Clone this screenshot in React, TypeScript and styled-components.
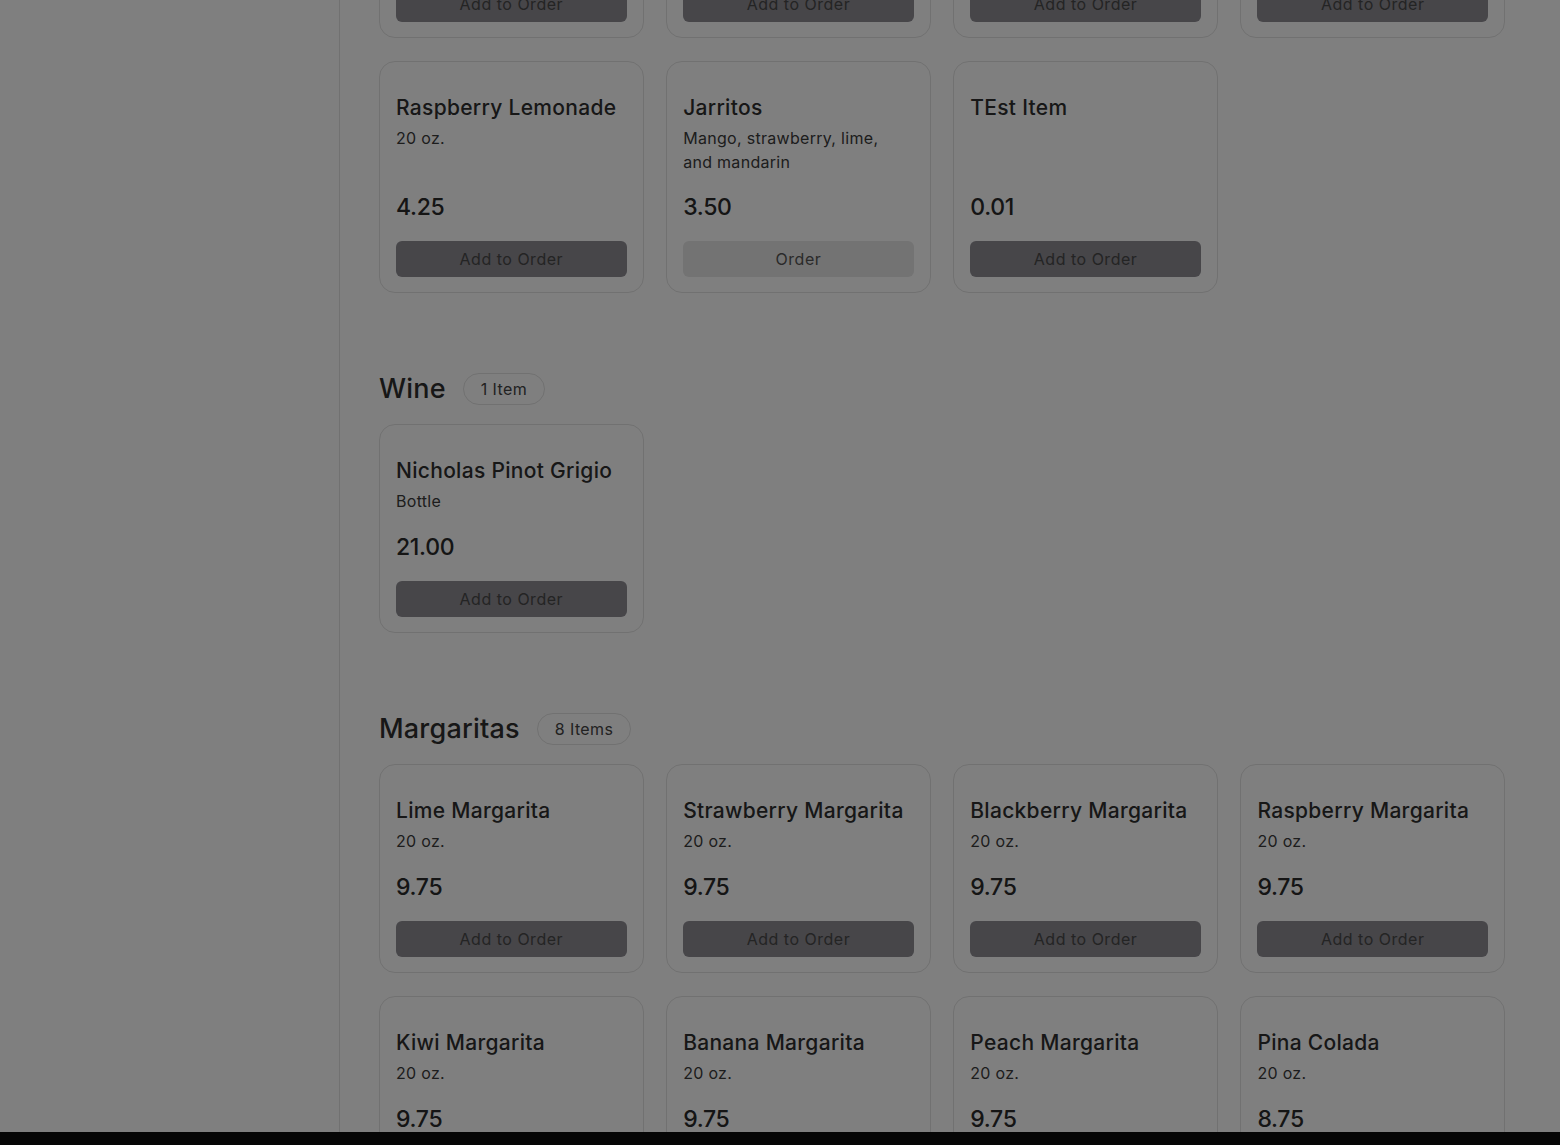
import React from 'react';
import styled, { createGlobalStyle } from 'styled-components';

interface MenuItem {
  name: string;
  description?: string;
  price: string;
  action?: 'add' | 'order';
}

interface MenuSection {
  title?: string;
  count?: string;
  items: MenuItem[];
}

const GlobalStyle = createGlobalStyle`
  html, body {
    margin: 0;
    padding: 0;
    background: #ffffff;
    overflow: hidden;
  }
  body {
    font-family: Inter, "Open Sans", sans-serif;
    color: #2f2f2f;
  }
`;

const Page = styled.div`
  display: flex;
  min-height: 100vh;
  height: 100vh;
  overflow: hidden;
`;

const Sidebar = styled.aside`
  width: 339px;
  flex-shrink: 0;
  border-right: 1px solid #e2e2e2;
  background: #ffffff;
`;

const Main = styled.main`
  flex: 1;
  padding: 0 55px 0 39px;
`;

/* the list is scrolled: the first visible row is the tail of a section */
const Scrolled = styled.div`
  margin-top: -171px;
`;

const Section = styled.section`
  margin-bottom: 80px;
`;

const SectionHeader = styled.div`
  display: flex;
  align-items: center;
  gap: 17px;
  height: 32px;
  margin-bottom: 19px;
`;

const SectionTitle = styled.h2`
  margin: 0;
  font-size: 27px;
  font-weight: 500;
  color: #2f2f2f;
  line-height: 34px;
  letter-spacing: 0.2px;
`;

const CountBadge = styled.span`
  display: inline-flex;
  align-items: center;
  height: 30px;
  padding: 0 17px;
  border: 1px solid #e2e2e2;
  border-radius: 999px;
  font-size: 16px;
  letter-spacing: 0.4px;
  color: #444;
`;

const Grid = styled.div`
  display: grid;
  grid-template-columns: repeat(4, 1fr);
  column-gap: 22.5px;
  row-gap: 23px;
`;

const Card = styled.div`
  display: flex;
  flex-direction: column;
  border: 1px solid #e2e2e2;
  border-radius: 16px;
  padding: 32px 16px 15px;
  box-sizing: border-box;
  min-height: 209px;
  background: #ffffff;
`;

const ItemName = styled.h3`
  margin: 0;
  font-size: 21px;
  font-weight: 500;
  line-height: 28px;
  letter-spacing: 0.3px;
  color: #2f2f2f;
  white-space: nowrap;
`;

const ItemDesc = styled.p`
  margin: 4px 0 0;
  font-size: 16px;
  line-height: 24px;
  min-height: 24px;
  letter-spacing: 0.3px;
  max-width: 215px;
  color: #3a3a3a;
`;

const Bottom = styled.div`
  margin-top: auto;
  padding-top: 18px;
  display: flex;
  flex-direction: column;
  gap: 19px;
`;

const Price = styled.div`
  font-size: 23px;
  font-weight: 500;
  line-height: 30px;
  letter-spacing: -0.3px;
  color: #2a2a2a;
`;

const ActionButton = styled.button<{ $variant: 'add' | 'order' }>`
  height: 36px;
  width: 100%;
  border: none;
  border-radius: 6px;
  font-family: inherit;
  font-size: 16px;
  letter-spacing: 0.5px;
  cursor: pointer;
  background: ${({ $variant }) => ($variant === 'add' ? '#8e8c93' : '#e6e6e6')};
  color: ${({ $variant }) => ($variant === 'add' ? '#484848' : '#555555')};
`;

const Overlay = styled.div`
  position: fixed;
  inset: 0;
  background: rgba(0, 0, 0, 0.5);
`;

const BottomSheet = styled.div`
  position: fixed;
  left: 0;
  right: 0;
  bottom: 0;
  height: 13px;
  background: #060606;
`;

const sections: MenuSection[] = [
  {
    items: [
      { name: 'Horchata', description: '20 oz.', price: '4.25' },
      { name: 'Iced Tea', description: '20 oz.', price: '3.50' },
      { name: 'Lemonade', description: '20 oz.', price: '3.75' },
      { name: 'Strawberry Lemonade', description: '20 oz.', price: '4.25' },
      { name: 'Raspberry Lemonade', description: '20 oz.', price: '4.25' },
      { name: 'Jarritos', description: 'Mango, strawberry, lime, and mandarin', price: '3.50', action: 'order' },
      { name: 'TEst Item', price: '0.01' }
    ]
  },
  {
    title: 'Wine',
    count: '1 Item',
    items: [{ name: 'Nicholas Pinot Grigio', description: 'Bottle', price: '21.00' }]
  },
  {
    title: 'Margaritas',
    count: '8 Items',
    items: [
      { name: 'Lime Margarita', description: '20 oz.', price: '9.75' },
      { name: 'Strawberry Margarita', description: '20 oz.', price: '9.75' },
      { name: 'Blackberry Margarita', description: '20 oz.', price: '9.75' },
      { name: 'Raspberry Margarita', description: '20 oz.', price: '9.75' },
      { name: 'Kiwi Margarita', description: '20 oz.', price: '9.75' },
      { name: 'Banana Margarita', description: '20 oz.', price: '9.75' },
      { name: 'Peach Margarita', description: '20 oz.', price: '9.75' },
      { name: 'Pina Colada', description: '20 oz.', price: '8.75' }
    ]
  }
];

const ItemCard: React.FC<{ item: MenuItem }> = ({ item }) => {
  const variant = item.action ?? 'add';
  return (
    <Card>
      <ItemName>{item.name}</ItemName>
      <ItemDesc>{item.description}</ItemDesc>
      <Bottom>
        <Price>{item.price}</Price>
        <ActionButton $variant={variant}>{variant === 'add' ? 'Add to Order' : 'Order'}</ActionButton>
      </Bottom>
    </Card>
  );
};

const App: React.FC = () => {
  return (
    <>
      <GlobalStyle />
      <Page>
        <Sidebar />
        <Main>
          <Scrolled>
            {sections.map((section, i) => (
              <Section key={i}>
                {section.title && (
                  <SectionHeader>
                    <SectionTitle>{section.title}</SectionTitle>
                    <CountBadge>{section.count}</CountBadge>
                  </SectionHeader>
                )}
                <Grid>
                  {section.items.map((item) => (
                    <ItemCard key={item.name} item={item} />
                  ))}
                </Grid>
              </Section>
            ))}
          </Scrolled>
        </Main>
      </Page>
      <Overlay />
      <BottomSheet />
    </>
  );
};

export default App;
